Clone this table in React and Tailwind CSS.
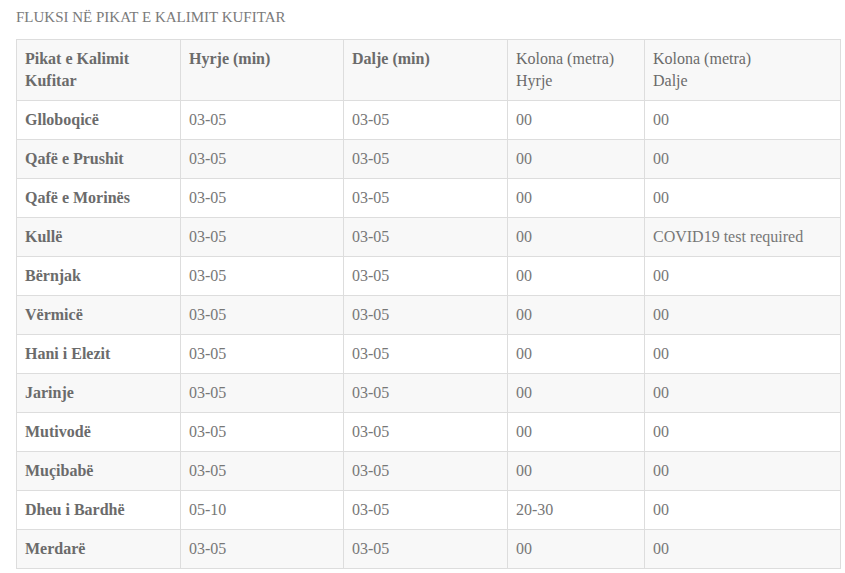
const rows = [
  ["Glloboqicë", "03-05", "03-05", "00", "00"],
  ["Qafë e Prushit", "03-05", "03-05", "00", "00"],
  ["Qafë e Morinës", "03-05", "03-05", "00", "00"],
  ["Kullë", "03-05", "03-05", "00", "COVID19 test required"],
  ["Bërnjak", "03-05", "03-05", "00", "00"],
  ["Vërmicë", "03-05", "03-05", "00", "00"],
  ["Hani i Elezit", "03-05", "03-05", "00", "00"],
  ["Jarinje", "03-05", "03-05", "00", "00"],
  ["Mutivodë", "03-05", "03-05", "00", "00"],
  ["Muçibabë", "03-05", "03-05", "00", "00"],
  ["Dheu i Bardhë", "05-10", "03-05", "20-30", "00"],
  ["Merdarë", "03-05", "03-05", "00", "00"],
];

export default function App() {
  return (
    <div className="bg-white px-4 pt-[7px] font-['Liberation_Serif',serif] text-[#777]">
      {/* Title */}
      <h2 className="text-[15px] leading-[20px] uppercase text-[#7a7a7a] mb-3">
        Fluksi në pikat e kalimit kufitar
      </h2>

      {/* Table */}
      <table className="table-fixed border-collapse w-[824px] text-[16px] leading-[22px]">
        <colgroup>
          <col className="w-[164px]" />
          <col className="w-[163px]" />
          <col className="w-[164px]" />
          <col className="w-[137px]" />
          <col className="w-[196px]" />
        </colgroup>
        <thead>
          <tr className="bg-[#f8f8f8] text-left align-top">
            <th className="border border-[#dddddd] px-2 py-2 font-bold text-[#6b6b6b]">Pikat e Kalimit<br />Kufitar</th>
            <th className="border border-[#dddddd] px-2 py-2 font-bold text-[#6b6b6b]">Hyrje (min)</th>
            <th className="border border-[#dddddd] px-2 py-2 font-bold text-[#6b6b6b]">Dalje (min)</th>
            <th className="border border-[#dddddd] px-2 py-2 font-normal text-[#6b6b6b]">Kolona (metra)<br />Hyrje</th>
            <th className="border border-[#dddddd] px-2 py-2 font-normal text-[#6b6b6b]">Kolona (metra)<br />Dalje</th>
          </tr>
        </thead>
        <tbody>
          {rows.map((r, i) => (
            <tr key={i} className={i % 2 === 1 ? "bg-[#f8f8f8]" : "bg-white"}>
              <td className="border border-[#dddddd] px-2 py-2 font-bold text-[#6b6b6b]">{r[0]}</td>
              <td className="border border-[#dddddd] px-2 py-2">{r[1]}</td>
              <td className="border border-[#dddddd] px-2 py-2">{r[2]}</td>
              <td className="border border-[#dddddd] px-2 py-2">{r[3]}</td>
              <td className="border border-[#dddddd] px-2 py-2">{r[4]}</td>
            </tr>
          ))}
        </tbody>
      </table>
    </div>
  );
}
